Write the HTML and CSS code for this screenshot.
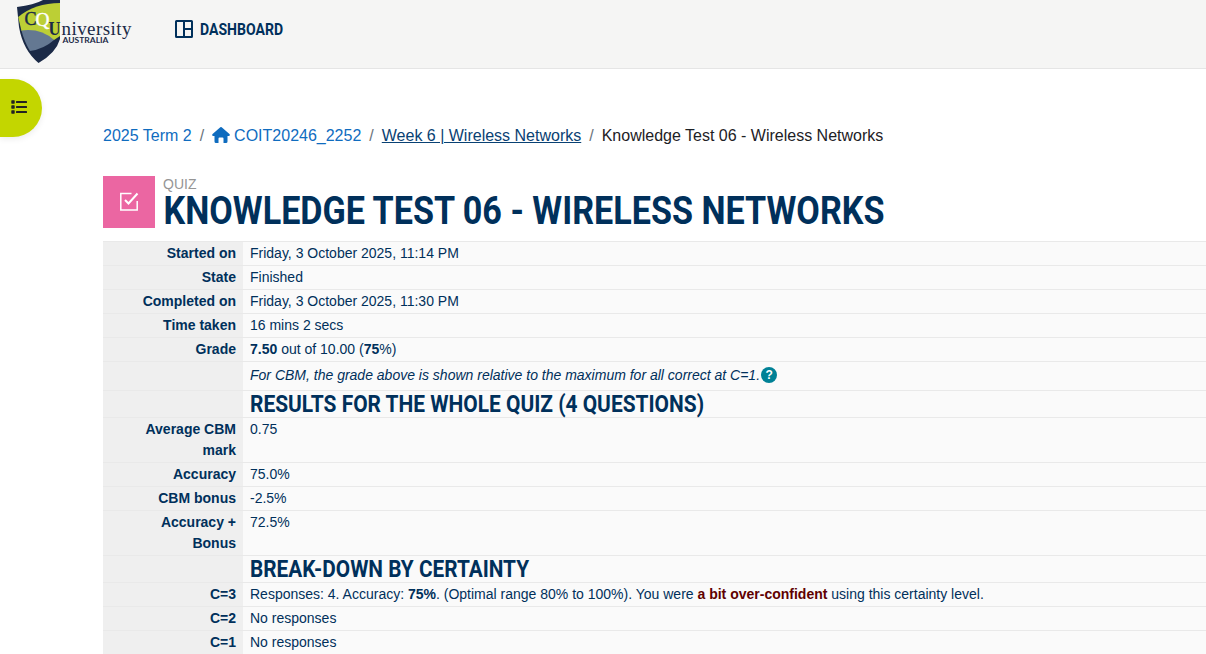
FILE: index.html
```html
<!DOCTYPE html>
<html lang="en">
<head>
<meta charset="utf-8">
<title>Knowledge Test 06 - Wireless Networks</title>
<link rel="stylesheet" href="styles.css">
</head>
<body>
<header class="topbar">
  <svg class="logo" width="120" height="66" viewBox="0 0 120 66" role="img" aria-label="CQUniversity Australia">
    <path fill="#1b2a47" d="M1 7Q18 5 27 0H44V39Q40 53 22.500 63Q7 50 3 27Z"/>
    <path fill="#bccf35" d="M2.200 17Q19 3 44 3V36L38 40L5.500 31Z"/>
    <path fill="#647892" d="M5.500 30.500Q25 28 38 40Q28 49 14 51Q8 41 5.500 30.500Z"/>
    <text class="logo-serif" x="8.500" y="24.500" font-size="18" stroke="#1b2a47" stroke-width=".4" fill="#1b2a47" textLength="12" lengthAdjust="spacingAndGlyphs">C</text>
    <text class="logo-serif" x="19.500" y="25.500" font-size="18" stroke="#fff" stroke-width=".4" fill="#fff" textLength="14" lengthAdjust="spacingAndGlyphs">Q</text>
    <text class="logo-serif" x="32.500" y="34.500" font-size="19" font-weight="bold" fill="#1b2a47" textLength="12" lengthAdjust="spacingAndGlyphs">U</text>
    <text class="logo-serif" x="45.500" y="34.500" font-size="19" fill="#1b2a47" textLength="70" lengthAdjust="spacing">niversity</text>
    <text class="logo-sans" x="46.500" y="43" font-size="7.500" fill="#1b2a47" textLength="46" lengthAdjust="spacingAndGlyphs">AUSTRALIA</text>
  </svg>
  <a class="nav">
    <svg width="18" height="18" viewBox="0 0 18 18" fill="none" stroke="#00305b" stroke-width="2"><rect x="1" y="1" width="16" height="16" rx=".5"/><path d="M9 1V17M9 9H17"/></svg>
    <svg class="label" width="86" height="20"><text class="cond" x="0" y="16" font-size="16" textLength="83" lengthAdjust="spacingAndGlyphs">DASHBOARD</text></svg>
  </a>
</header>
<button class="drawer" aria-label="Open course index">
  <svg width="16" height="14" viewBox="0 0 16 14" fill="#222"><rect width="3.400" height="3.400" x=".3" y=".3" rx=".6"/><rect width="3.400" height="3.400" x=".3" y="5.300" rx=".6"/><rect width="3.400" height="3.400" x=".3" y="10.300" rx=".6"/><rect x="5" y="1" width="11" height="2" rx=".5"/><rect x="5" y="6" width="11" height="2" rx=".5"/><rect x="5" y="11" width="11" height="2" rx=".5"/></svg>
</button>
<main class="page">
  <nav class="crumbs">
    <a>2025 Term 2</a><span class="sep">/</span>
    <a class="home"><svg width="18" height="16" viewBox="0 0 18 16"><path fill="#0f6cbf" d="M8.300.3Q9 -.2 9.700.3L17.700 7.300Q18.200 8.900 17 9H15.500V14.500Q15.500 16 14 16H11.500V11.500Q11.500 10.500 10.500 10.500H7.500Q6.500 10.500 6.500 11.500V16H4Q2.500 16 2.500 14.500V9H1Q-.2 8.900.3 7.300Z"/></svg>COIT20246_2252</a><span class="sep">/</span>
    <a class="hovered">Week 6 | Wireless Networks</a><span class="sep">/</span>
    <span>Knowledge Test 06 - Wireless Networks</span>
  </nav>
  <div class="heading">
    <div class="tile"><svg width="20" height="20" viewBox="0 0 20 20" fill="none" stroke="#fff" stroke-width="1.500"><path d="M12.500 1.500H1.800V18H18.200V9"/><path stroke-width="2" d="M6 8L9.500 11.500L18.500 1.500"/></svg></div>
    <div class="titles">
      <div class="kind">QUIZ</div>
      <h1><svg width="740" height="38"><text class="cond" x=".5" y="32" font-size="39.500" textLength="721" lengthAdjust="spacingAndGlyphs">KNOWLEDGE TEST 06 - WIRELESS NETWORKS</text></svg></h1>
    </div>
  </div>
  <table class="summary">
    <tr><th>Started on</th><td>Friday, 3 October 2025, 11:14 PM</td></tr>
    <tr><th>State</th><td>Finished</td></tr>
    <tr><th>Completed on</th><td>Friday, 3 October 2025, 11:30 PM</td></tr>
    <tr><th>Time taken</th><td>16 mins 2 secs</td></tr>
    <tr><th>Grade</th><td><b>7.50</b> out of 10.00 (<b>75</b>%)</td></tr>
    <tr><th></th><td><div class="note"><em>For CBM, the grade above is shown relative to the maximum for all correct at C=1.</em><span class="help">?</span></div></td></tr>
    <tr><th></th><td><h3><svg width="460" height="24"><text class="cond" x="0" y="20" font-size="24" textLength="454" lengthAdjust="spacingAndGlyphs">RESULTS FOR THE WHOLE QUIZ (4 QUESTIONS)</text></svg></h3></td></tr>
    <tr><th>Average CBM mark</th><td>0.75</td></tr>
    <tr><th>Accuracy</th><td>75.0%</td></tr>
    <tr><th>CBM bonus</th><td>-2.5%</td></tr>
    <tr><th>Accuracy + Bonus</th><td>72.5%</td></tr>
    <tr><th></th><td><h3><svg width="460" height="24"><text class="cond" x="0" y="20" font-size="24" textLength="279" lengthAdjust="spacingAndGlyphs">BREAK-DOWN BY CERTAINTY</text></svg></h3></td></tr>
    <tr><th>C=3</th><td>Responses: 4. Accuracy: <b>75%</b>. (Optimal range 80% to 100%). You were <b class="over">a bit over-confident</b> using this certainty level.</td></tr>
    <tr><th>C=2</th><td>No responses</td></tr>
    <tr><th>C=1</th><td>No responses</td></tr>
  </table>
</main>
</body>
</html>
```
FILE: styles.css
```css
* { box-sizing: border-box; }
body { margin: 0; height: 654px; overflow: hidden; background: #fff; color: #00305b; font-family: "Liberation Sans", Arial, sans-serif; font-size: 14px; }
svg { display: block; flex: none; overflow: visible; }
.topbar { height: 69px; background: #f5f5f4; border-bottom: 1px solid #e5e5e5; display: flex; align-items: flex-start; padding-left: 16px; }
.logo-serif { font-family: "Liberation Serif", serif; }
.logo-sans { font-family: Lato, sans-serif; font-weight: bold; }
.nav { display: flex; gap: 7px; padding: 20px 0 0 39px; }
.nav .label { margin-top: -1px; }
.cond { font-family: Roboto, sans-serif; font-weight: bold; fill: #00305b; }
.drawer { position: absolute; left: 0; top: 79px; width: 42px; height: 58px; padding: 0 0 2px 11px; border: 0; border-radius: 0 29px 29px 0; background: #c3d600; box-shadow: 0 2px 6px rgba(0,0,0,.08); display: flex; align-items: center; }
.page { padding: 57px 0 0 103px; }
.crumbs { display: flex; height: 20px; line-height: 20px; font-size: 16px; color: #1d2125; white-space: nowrap; }
.crumbs a { color: #0f6cbf; }
.crumbs .home { display: flex; align-items: center; gap: 4px; }
.crumbs .home svg { margin-top: -2px; }
.crumbs .hovered { color: #094173; text-decoration: underline; }
.crumbs .sep { color: #6a737b; padding: 0 8px; }
.heading { display: flex; gap: 8px; margin-top: 30px; height: 52px; }
.tile { width: 52px; height: 52px; background: #eb66a2; display: grid; place-items: center; }
.kind { height: 16px; line-height: 16px; color: #959595; }
h1, h3 { margin: 0; }
.summary { width: 100%; margin-top: 13px; border-collapse: separate; border-spacing: 0; table-layout: fixed; line-height: 21px; }
.summary th, .summary td { border-top: 1px solid #e9e9e9; padding: 1px 7px; vertical-align: top; }
.summary th { width: 140px; padding-left: 28px; background: #efefef; text-align: right; }
.summary td { background: #fafafa; text-align: left; }
.note { display: flex; align-items: center; height: 26px; padding-bottom: 2px; }
.help { width: 16px; height: 16px; margin-left: 1px; border-radius: 50%; background: #008196; color: #fff; font-weight: bold; font-size: 12px; line-height: 16px; text-align: center; }
.over { color: #600000; }
```
